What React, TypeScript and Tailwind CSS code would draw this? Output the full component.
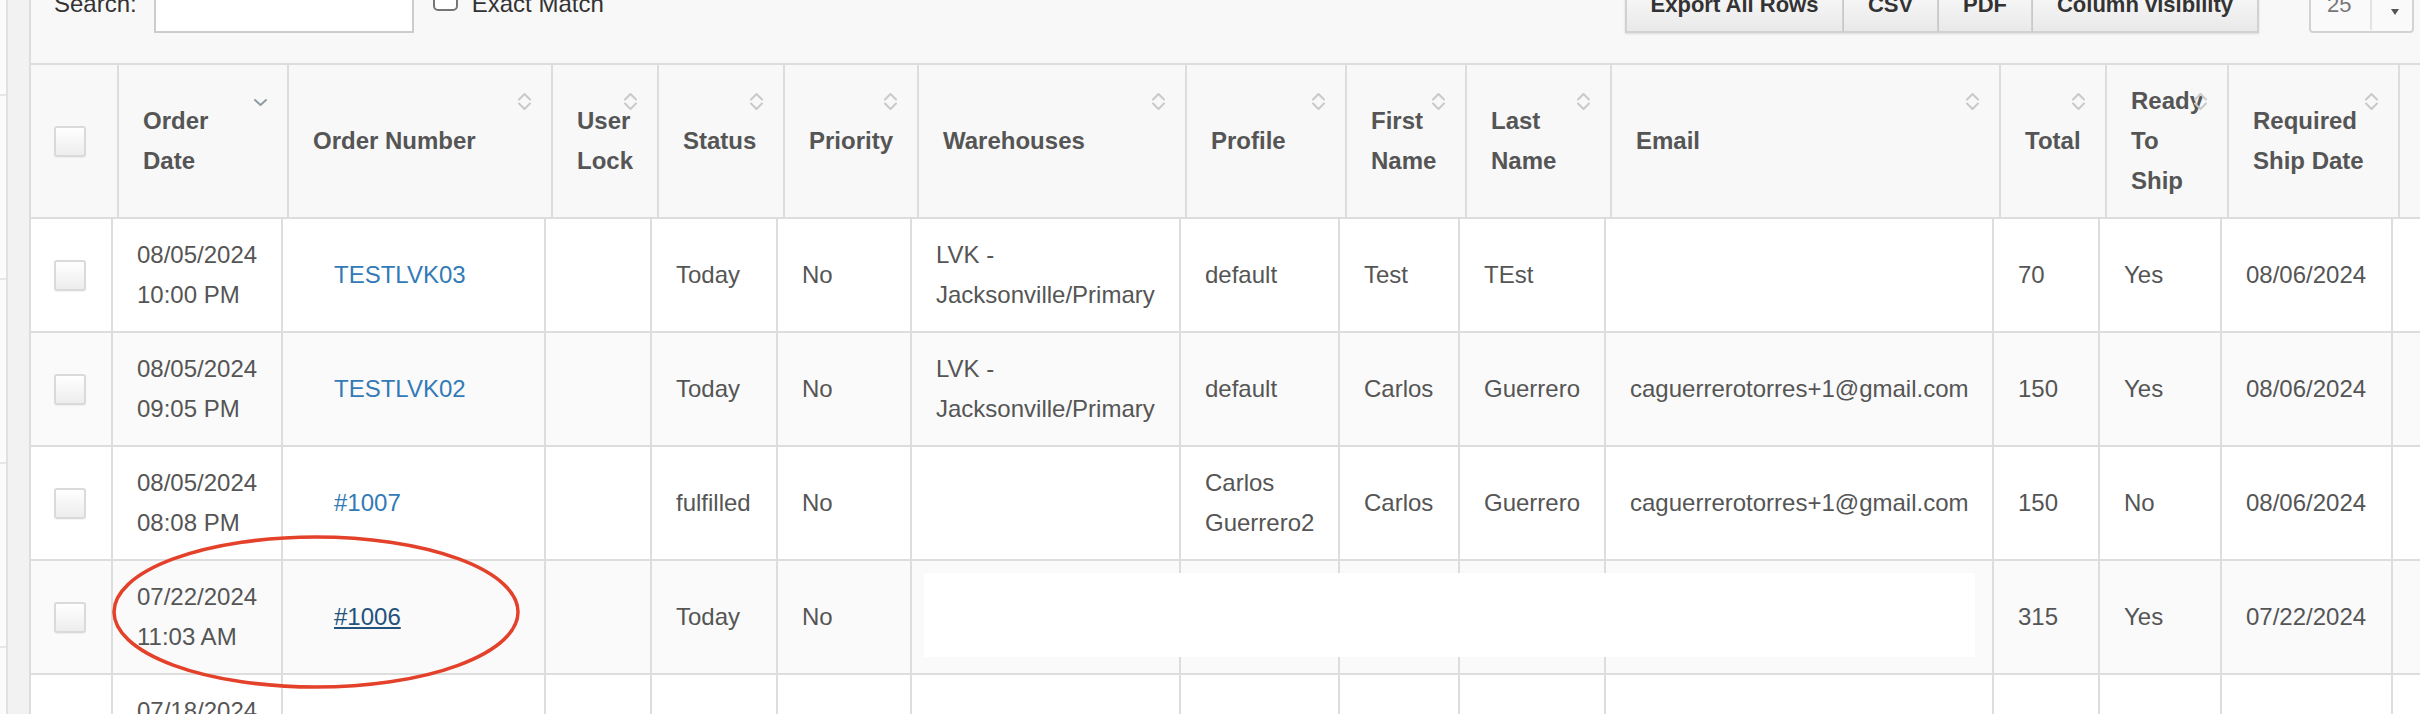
import React from "react";

const headW = [
  "w-[86px]", "w-[170px]", "w-[264px]", "w-[106px]", "w-[126px]", "w-[134px]", "w-[268px]",
  "w-[160px]", "w-[120px]", "w-[145px]", "w-[389px]", "w-[106px]", "w-[122px]", "w-[171px]", "w-[300px]",
];
const bodyW = [
  "w-[80px]", "w-[170px]", "w-[263px]", "w-[106px]", "w-[126px]", "w-[134px]", "w-[269px]",
  "w-[159px]", "w-[120px]", "w-[146px]", "w-[388px]", "w-[106px]", "w-[122px]", "w-[171px]", "w-[300px]",
];

const headers = [
  "", "Order Date", "Order Number", "User Lock", "Status", "Priority", "Warehouses", "Profile",
  "First Name", "Last Name", "Email", "Total", "Ready To Ship", "Required Ship Date", "",
];

type Row = {
  date: [string, string];
  order: string;
  visited?: boolean;
  status: string;
  priority: string;
  warehouse: string;
  profile: string;
  first: string;
  last: string;
  email: string;
  total: string;
  ready: string;
  ship: string;
};

const rows: Row[] = [
  { date: ["08/05/2024", "10:00 PM"], order: "TESTLVK03", status: "Today", priority: "No", warehouse: "LVK - Jacksonville/Primary", profile: "default", first: "Test", last: "TEst", email: "", total: "70", ready: "Yes", ship: "08/06/2024" },
  { date: ["08/05/2024", "09:05 PM"], order: "TESTLVK02", status: "Today", priority: "No", warehouse: "LVK - Jacksonville/Primary", profile: "default", first: "Carlos", last: "Guerrero", email: "caguerrerotorres+1@gmail.com", total: "150", ready: "Yes", ship: "08/06/2024" },
  { date: ["08/05/2024", "08:08 PM"], order: "#1007", status: "fulfilled", priority: "No", warehouse: "", profile: "Carlos Guerrero2", first: "Carlos", last: "Guerrero", email: "caguerrerotorres+1@gmail.com", total: "150", ready: "No", ship: "08/06/2024" },
  { date: ["07/22/2024", "11:03 AM"], order: "#1006", visited: true, status: "Today", priority: "No", warehouse: "", profile: "", first: "", last: "", email: "", total: "315", ready: "Yes", ship: "07/22/2024" },
  { date: ["07/18/2024", "04:12 PM"], order: "", status: "", priority: "", warehouse: "", profile: "", first: "", last: "", email: "", total: "", ready: "", ship: "" },
];

function Box() {
  return (
    <div className="w-[32px] h-[31px] border-2 border-[#dadada] rounded-[3px] bg-gradient-to-b from-white to-[#ededed] shadow-[0_1px_1px_rgba(0,0,0,0.05)]" />
  );
}

function SortBoth() {
  return (
    <svg className="absolute top-[27px] right-[19px]" width="15" height="19" viewBox="0 0 15 19" fill="none">
      <path d="M2 7.5 L7.5 2 L13 7.5" stroke="#c9c9c9" strokeWidth="2" strokeLinecap="round" strokeLinejoin="round" />
      <path d="M2 11.5 L7.5 17 L13 11.5" stroke="#c9c9c9" strokeWidth="2" strokeLinecap="round" strokeLinejoin="round" />
    </svg>
  );
}

function SortDesc() {
  return (
    <svg className="absolute top-[33px] right-[19px]" width="15" height="9" viewBox="0 0 15 9" fill="none">
      <path d="M2 2 L7.5 7 L13 2" stroke="#8e9ca6" strokeWidth="2" strokeLinecap="round" strokeLinejoin="round" />
    </svg>
  );
}

function HeaderRow() {
  return (
    <div className="shrink-0 flex bg-[#f8f8f8] border-t-2 border-b-2 border-[#dddddd]">
      {headers.map((h, i) =>
        i === 0 ? (
          <div key={i} className={`${headW[i]} shrink-0 flex items-center pl-[23px] py-4`}>
            <Box />
          </div>
        ) : (
          <div
            key={i}
            className={`${headW[i]} shrink-0 relative flex items-center border-l-2 border-[#dddddd] pl-6 pr-[30px] py-4 font-bold text-[#555555] text-[24px] leading-[40px]`}
          >
            <span>{h}</span>
            {i === 1 ? <SortDesc /> : i < 14 ? <SortBoth /> : null}
          </div>
        )
      )}
    </div>
  );
}

function Cell({ i, children, extra = "" }: { i: number; children?: React.ReactNode; extra?: string }) {
  return (
    <div
      className={`${bodyW[i]} shrink-0 flex items-center border-l-2 border-[#dddddd] pl-6 pr-4 py-4 text-[#555555] text-[24px] leading-[40px] ${extra}`}
    >
      <div>{children}</div>
    </div>
  );
}

function BodyRow({ r, striped }: { r: Row; striped: boolean }) {
  return (
    <div className={`shrink-0 flex border-b-2 border-[#dddddd] ${striped ? "bg-[#fafafa]" : "bg-white"}`}>
      <div className={`${bodyW[0]} shrink-0 flex items-center pl-[23px] py-4`}>
        <Box />
      </div>
      <Cell i={1}>
        <div>{r.date[0]}</div>
        <div>{r.date[1]}</div>
      </Cell>
      <Cell i={2} extra="!pl-[51px]">
        <a className={r.visited ? "text-[#23527c] underline" : "text-[#337ab7]"}>{r.order}</a>
      </Cell>
      <Cell i={3} />
      <Cell i={4}>{r.status}</Cell>
      <Cell i={5}>{r.priority}</Cell>
      <Cell i={6}>
        {r.warehouse ? (
          <>
            <div>LVK -</div>
            <div>Jacksonville/Primary</div>
          </>
        ) : null}
      </Cell>
      <Cell i={7}>{r.profile}</Cell>
      <Cell i={8}>{r.first}</Cell>
      <Cell i={9}>{r.last}</Cell>
      <Cell i={10} extra="whitespace-nowrap">{r.email}</Cell>
      <Cell i={11}>{r.total}</Cell>
      <Cell i={12}>{r.ready}</Cell>
      <Cell i={13}>{r.ship}</Cell>
      <Cell i={14} />
    </div>
  );
}

function Toolbar() {
  const btn =
    "h-[60px] shrink-0 flex items-end justify-center pb-[15px] text-[22px] leading-[22px] font-bold text-[#333333] border-2 border-[#d2d2d2] bg-gradient-to-b from-white to-[#e9e9e9] shadow-[0_1px_2px_rgba(0,0,0,0.12)]";
  return (
    <div className="shrink-0 h-[63px] w-full overflow-hidden bg-[#f8f8f8] flex items-end pb-[30px] pl-[23px] pr-[6px]">
      <span className="shrink-0 text-[24px] leading-[24px] text-[#333333] mb-[17px]">Search:</span>
      <div className="ml-[17px] w-[260px] h-[56px] shrink-0 border-2 border-[#cccccc] bg-white" />
      <div className="ml-[19px] w-[25px] h-[24px] shrink-0 border-2 border-[#767676] rounded-[5px] bg-white mb-[22px]" />
      <span className="shrink-0 ml-[14px] text-[24px] leading-[24px] text-[#333333] mb-[17px] whitespace-nowrap">Exact Match</span>
      <div className="ml-auto shrink-0 flex items-end">
        <div className="flex">
          <div className={`${btn} w-[219px]`}>Export All Rows</div>
          <div className={`${btn} w-[95px] border-l-0`}>CSV</div>
          <div className={`${btn} w-[94px] border-l-0`}>PDF</div>
          <div className={`${btn} w-[226px] border-l-0`}>Column visibility</div>
        </div>
        <div className="ml-[50px] shrink-0 relative w-[105px] h-[60px] border-2 border-[#d3d3d3] rounded-b-[4px] bg-[#fafafa] flex items-end pl-4 pb-[15px] text-[22px] leading-[22px] text-[#777777]">
          25
          <div className="absolute left-[59px] top-0 h-[55px] w-[2px] bg-[#e3e3e3]" />
          <div className="absolute left-[80px] top-[34px] w-0 h-0 border-l-[4px] border-r-[4px] border-t-[6px] border-l-transparent border-r-transparent border-t-[#555555]" />
        </div>
      </div>
    </div>
  );
}

export default function App() {
  return (
    <div className="relative w-[2420px] h-[714px] overflow-hidden flex bg-white font-['Liberation_Sans',Arial,sans-serif]">
      {/* left strip */}
      <div className="w-[29px] shrink-0 flex h-full">
        <div className="w-[6px] flex flex-col bg-[#fbfbfb]">
          <div className="shrink-0 h-[96px] border-b-2 border-[#e6e6e6]" />
          <div className="shrink-0 h-[184px] border-b-2 border-[#e6e6e6]" />
          <div className="shrink-0 h-[184px] border-b-2 border-[#e6e6e6]" />
          <div className="shrink-0 h-[184px] border-b-2 border-[#e6e6e6]" />
          <div className="flex-1" />
        </div>
        <div className="w-[2px] bg-[#e1e1e1]" />
        <div className="flex-1 bg-[#f2f2f2]" />
      </div>

      {/* panel */}
      <div className="flex-1 min-w-0 h-full overflow-hidden border-l-2 border-[#dddddd] flex flex-col">
        <Toolbar />
        <HeaderRow />
        {rows.map((r, idx) => (
          <BodyRow key={idx} r={r} striped={idx % 2 === 1} />
        ))}
      </div>

      {/* redaction */}
      <div className="absolute left-[924px] top-[573px] w-[1051px] h-[84px] bg-white" />

      {/* annotation ellipse */}
      <svg className="absolute left-0 top-0 pointer-events-none" width="2420" height="714" viewBox="0 0 2420 714">
        <ellipse cx="316" cy="612" rx="202" ry="75" fill="none" stroke="#e4412b" strokeWidth="3.5" />
      </svg>
    </div>
  );
}
